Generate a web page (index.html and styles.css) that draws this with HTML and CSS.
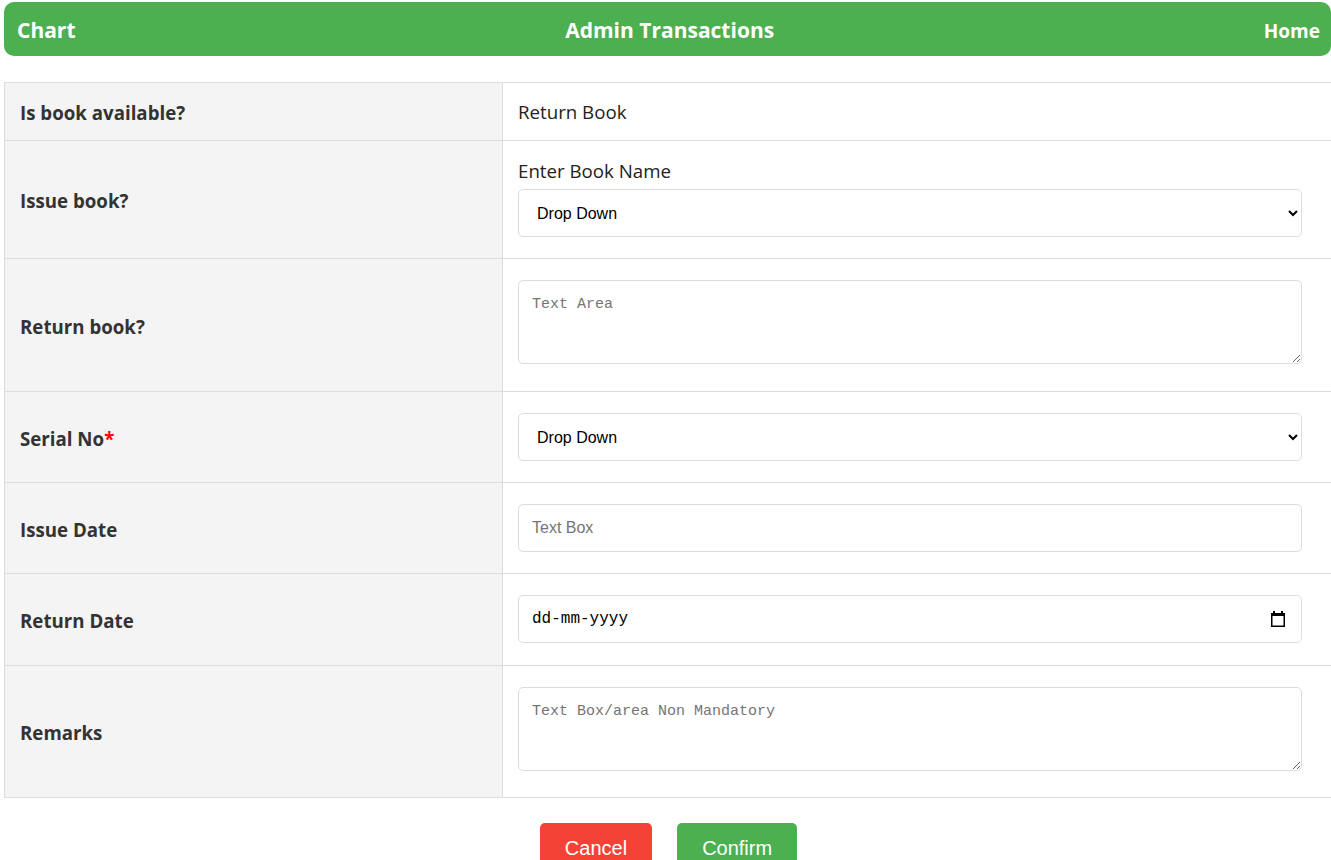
FILE: index.html
```html
<!DOCTYPE html>
<html lang="en">
<head>
<meta charset="utf-8">
<title>Admin Transactions</title>
<link rel="stylesheet" href="styles.css">
</head>
<body>
<div class="page">
  <header class="topbar">
    <span class="brand">Chart</span>
    <span class="title">Admin Transactions</span>
    <span class="home">Home</span>
  </header>

  <div class="form-table">
    <div class="row">
      <div class="label">Is book available?</div>
      <div class="field"><span class="value">Return Book</span></div>
    </div>
    <div class="row">
      <div class="label">Issue book?</div>
      <div class="field">
        <div class="text">Enter Book Name</div>
        <select class="control select"><option>Drop Down</option></select>
      </div>
    </div>
    <div class="row">
      <div class="label">Return book?</div>
      <div class="field"><textarea class="control area" placeholder="Text Area"></textarea></div>
    </div>
    <div class="row">
      <div class="label">Serial No<span class="req">*</span></div>
      <div class="field"><select class="control select"><option>Drop Down</option></select></div>
    </div>
    <div class="row">
      <div class="label">Issue Date</div>
      <div class="field"><input class="control input" type="text" placeholder="Text Box"></div>
    </div>
    <div class="row">
      <div class="label">Return Date</div>
      <div class="field">
        <div class="date-wrap">
          <input class="control input date" type="text" placeholder="dd-mm-yyyy">
          <svg class="cal" width="14" height="16" viewBox="0 0 14 16" aria-hidden="true">
            <rect x="2" y="0" width="2" height="3" fill="#000"/>
            <rect x="10" y="0" width="2" height="3" fill="#000"/>
            <rect x="0" y="2" width="14" height="3" fill="#000"/>
            <rect x="0.75" y="2.75" width="12.5" height="12.5" fill="none" stroke="#000" stroke-width="1.5"/>
          </svg>
        </div>
      </div>
    </div>
    <div class="row">
      <div class="label">Remarks</div>
      <div class="field"><textarea class="control area area-last" placeholder="Text Box/area Non Mandatory"></textarea></div>
    </div>
  </div>

  <div class="actions">
    <button class="btn cancel">Cancel</button>
    <button class="btn confirm">Confirm</button>
  </div>
</div>
</body>
</html>
```

FILE: styles.css
```css
* { box-sizing: border-box; }
html, body { margin: 0; padding: 0; background: #fff; }
body {
  font-family: "Open Sans", "Noto Sans", Arial, sans-serif;
  color: #333;
  overflow: hidden;
}
.page {
  padding: 2px 0 0 4px;
  width: 1331px;
}
.topbar {
  height: 54px;
  background: #4caf50;
  border-radius: 10px;
  color: #fff;
  display: flex;
  align-items: center;
  justify-content: space-between;
  padding: 2px 11px 0 13px;
  font-weight: 700;
}
.brand, .title { font-size: 21px; }
.home { font-size: 19px; padding-top: 2px; }

.form-table {
  margin-top: 26px;
  border-top: 1px solid #ddd;
  border-left: 1px solid #ddd;
}
.row {
  display: grid;
  grid-template-columns: 498px 1fr;
  border-bottom: 1px solid #ddd;
}
.label {
  background: #f4f4f4;
  border-right: 1px solid #ddd;
  padding: 17px 15px 15px;
  font-weight: 700;
  font-size: 18.7px;
  line-height: 25px;
  display: flex;
  align-items: center;
}
.req { color: #f00; }
.field {
  padding: 16px 29px 16px 15px;
  font-size: 18.7px;
  color: #222;
  line-height: 25px;
}
.value { line-height: 25px; }
.field .text { display: block; line-height: 27px; }
.control {
  display: block;
  width: 100%;
  margin: 5px 0;
  border: 1px solid #ddd;
  border-radius: 5px;
  background: #fff;
  color: #000;
}
.select {
  height: 48px;
  font-family: "Liberation Sans", Arial, sans-serif;
  font-size: 16px;
  padding: 0 15px 0 14px;
}
.input {
  height: 48px;
  font-family: "Liberation Sans", Arial, sans-serif;
  font-size: 16px;
  padding: 0 13px;
}
.input::placeholder { color: #757575; }
.date-wrap { position: relative; margin: 5px 0 6px; }
.date-wrap .control { margin: 0; }
.date {
  font-family: "Liberation Mono", monospace;
  font-size: 16px;
}
.date::placeholder { color: #000; }
.cal {
  position: absolute;
  right: 17px;
  top: 16px;
}
.area {
  height: 84px;
  margin: 5px 0 11px;
  padding: 15px 13px 10px;
  font-family: "Liberation Mono", monospace;
  font-size: 15px;
  resize: vertical;
}
.area-last { margin-bottom: 10px; }
.area::placeholder { color: #757575; }

.actions {
  display: flex;
  justify-content: center;
  gap: 25px;
  margin-top: 25px;
  padding-left: 2px;
}
.btn {
  height: 50px;
  padding: 0 25px;
  border: none;
  border-radius: 5px;
  color: #fff;
  font-family: "Liberation Sans", Arial, sans-serif;
  font-size: 20px;
}
.cancel { background: #f44336; }
.confirm { background: #4caf50; }
```
